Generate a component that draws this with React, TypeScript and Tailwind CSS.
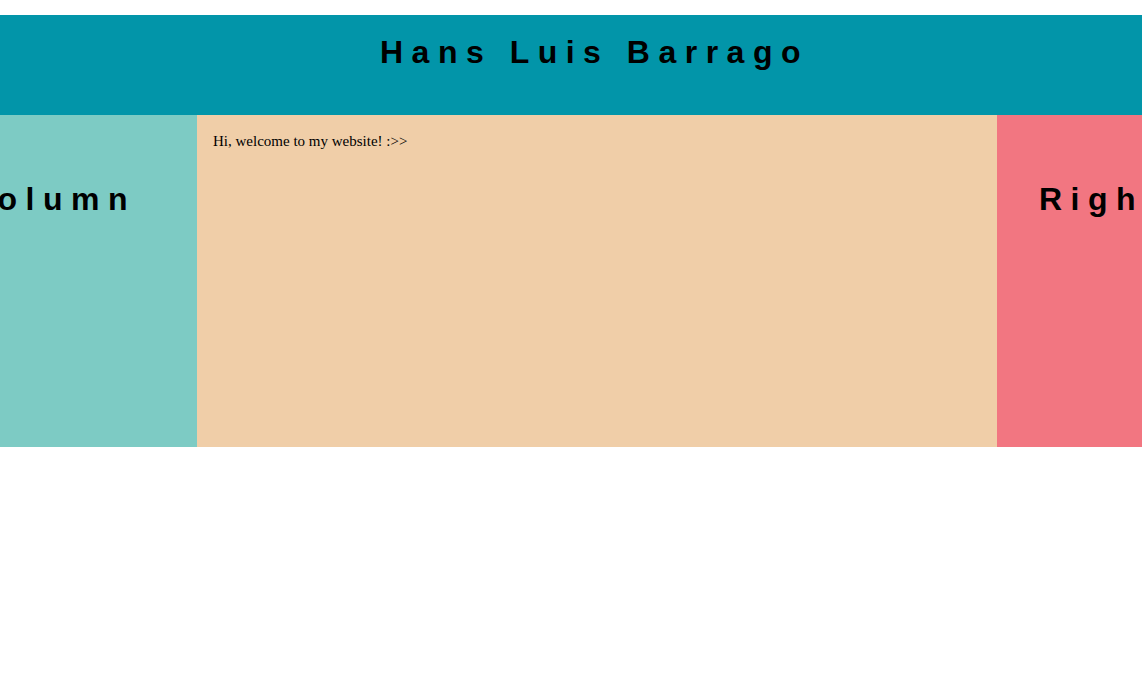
const SANS = "font-['Liberation_Sans',Arial,sans-serif]"

export default function App() {
  return (
    <div className="w-[1142px] overflow-hidden bg-white pt-[15px] min-h-[697px]">
      <header className="flex h-[100px] justify-center bg-[#0295a9] pl-[47px] pt-[19px]">
        <h1 className={`${SANS} whitespace-nowrap text-[32px] font-bold leading-[36px] tracking-[8.5px] text-black`}>
          Hans Luis Barrago
        </h1>
      </header>
      <div className="flex h-[332px]">
        <aside className="flex w-[197px] shrink-0 justify-end bg-[#7dcbc4] pr-[61px] pt-[66px]">
          <h2 className={`${SANS} shrink-0 whitespace-nowrap text-[32px] font-bold leading-[36px] tracking-[8.5px] text-black`}>
            Left Column
          </h2>
        </aside>
        <main className="w-[800px] shrink-0 bg-[#f0cea8] px-4 pt-[18px]">
          <p className="font-['Liberation_Serif','Times_New_Roman',serif] text-[15px] leading-[17px] text-black">
            Hi, welcome to my website! :&gt;&gt;
          </p>
        </main>
        <aside className="w-[200px] shrink-0 bg-[#f27681] pl-[42px] pt-[66px]">
          <h2 className={`${SANS} whitespace-nowrap text-[32px] font-bold leading-[36px] tracking-[8.5px] text-black`}>
            Right Column
          </h2>
        </aside>
      </div>
    </div>
  )
}
